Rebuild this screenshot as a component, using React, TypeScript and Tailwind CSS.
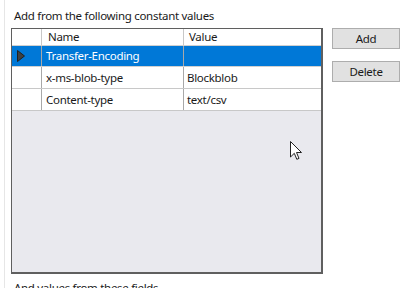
import React from "react";

const rows = [
  { name: "Transfer-Encoding", value: "", selected: true },
  { name: "x-ms-blob-type", value: "Blockblob", selected: false },
  { name: "Content-type", value: "text/csv", selected: false },
];

export default function App() {
  return (
    <div className="w-[400px] h-[288px] bg-white overflow-hidden relative font-['Noto_Sans',sans-serif] text-[11.5px] tracking-[-0.3px] text-[#1a1a1a]">
      <div className="ml-[4px] border-l border-[#e6e6e6] pl-[6px] pt-[7px] h-full">
        <div className="pl-[3px] leading-[17px] whitespace-nowrap">Add from the following constant values</div>
        <div className="flex mt-[4px]">
          <div className="w-[314px] h-[246px] border-l border-t border-r-2 border-b-2 border-[#5f5f5f] bg-[#e9e9ee] flex flex-col">
            <div className="flex h-[17px] bg-white border-b border-[#d0d0d0] leading-[16px]">
              <div className="w-[30px] border-r border-[#c8c8c8]" />
              <div className="w-[142px] border-r border-[#c8c8c8] pl-[6px]">Name</div>
              <div className="flex-1 pl-[5px]">Value</div>
            </div>
            {rows.map((r) => (
              <div
                key={r.name}
                className={
                  r.selected
                    ? "flex h-[21px] bg-[#0078d7] text-white border-b border-[#d0d0d0] leading-[20px]"
                    : "flex h-[22px] bg-white border-b border-[#c8c8c8] leading-[21px]"
                }
              >
                <div className="w-[30px] border-r border-[#a8a8a8] flex items-center pl-[5px]">
                  {r.selected && (
                    <svg width="8" height="12" viewBox="0 0 8 12">
                      <polygon points="0.5,0.5 7.5,6 0.5,11.5" fill="#404040" stroke="#202020" strokeWidth="1" />
                    </svg>
                  )}
                </div>
                <div className="w-[142px] border-r border-[#a8a8a8] pl-[4px] whitespace-nowrap">{r.name}</div>
                <div className="flex-1 pl-[3px] whitespace-nowrap">{r.value}</div>
              </div>
            ))}
          </div>
          <div className="ml-[9px] flex flex-col gap-[12px]">
            <button className="w-[68px] h-[21px] bg-[#e1e1e1] border border-[#adadad] text-[11.5px] tracking-[-0.3px] leading-[19px] text-[#1a1a1a]">Add</button>
            <button className="w-[68px] h-[21px] bg-[#e1e1e1] border border-[#adadad] text-[11.5px] tracking-[-0.3px] leading-[19px] text-[#1a1a1a]">Delete</button>
          </div>
        </div>
        <div className="pl-[3px] mt-[5px] leading-[17px] whitespace-nowrap">And values from these fields</div>
      </div>
      <svg className="absolute left-[290px] top-[141px]" width="13" height="20" viewBox="0 0 13 20">
        <path d="M0.5 0.5 L0.5 16 L4.3 12.3 L6.8 18.3 L9 17.4 L6.5 11.5 L11.5 11.5 Z" fill="white" stroke="#222" strokeWidth="1" strokeLinejoin="miter" />
      </svg>
    </div>
  );
}
